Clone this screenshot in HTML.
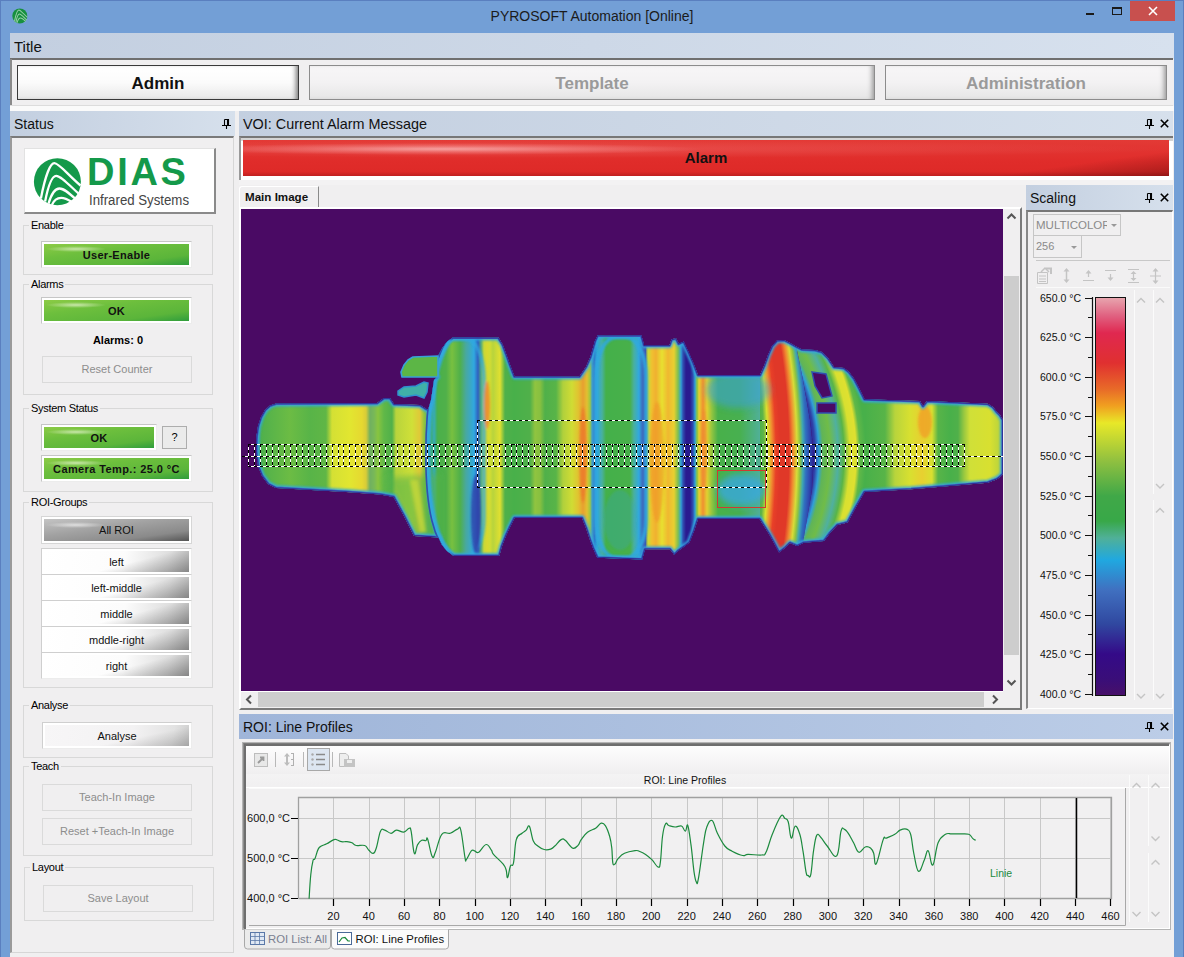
<!DOCTYPE html>
<html><head><meta charset="utf-8">
<style>
*{box-sizing:border-box;margin:0;padding:0}
html,body{width:1184px;height:957px;overflow:hidden}
body{position:relative;background:#739fd6;font-family:"Liberation Sans",sans-serif;color:#000}
.a{position:absolute}
.hdr{position:absolute;height:24px;background:linear-gradient(90deg,#c3cfe0,#d6e0ec);font-size:14px;color:#111;line-height:24px;padding-left:4px;white-space:nowrap}
.hdr.act{background:linear-gradient(90deg,#9fb5d9,#bccde7)}
.grp{position:absolute;border:1px solid #d8d8d8}
.gl{position:absolute;font-size:11px;letter-spacing:-0.3px;background:#f0eff0;padding:0 2px;line-height:13px;white-space:nowrap}
.gbtn{position:absolute;letter-spacing:0.3px;border:1px solid;border-color:#c6c6c6 #ececec #ececec #c6c6c6;padding:2px;background:radial-gradient(ellipse 30px 3px at 32px 5px,rgba(255,255,240,0.6),rgba(255,255,255,0)) content-box,linear-gradient(172deg,#8ccb46 0%,#6dbf3d 35%,#5bb53a 75%,#2f9d3c 100%) content-box,#fff;font-weight:bold;font-size:11px;text-align:center;color:#111;white-space:nowrap}
.wbtn{position:absolute;border:1px solid;border-color:#cfcfcf #ececec #ececec #cfcfcf;padding:2px;background:linear-gradient(165deg,rgba(0,0,0,0) 58%,rgba(0,0,0,0.32) 100%) content-box,linear-gradient(100deg,#fff 0%,#fcfcfc 55%,#dedede 85%,#c4c4c4 100%) content-box,#fff;font-size:11px;text-align:center;color:#111;white-space:nowrap}
.dbtn{position:absolute;border:1px solid #dadada;background:#f0eff0;font-size:11px;text-align:center;color:#8d8d8d;white-space:nowrap}
.pin{position:absolute;width:9px;height:11px}
</style></head><body>
<!-- window border -->
<div class="a" style="left:0;top:0;width:1184px;height:957px;border:1px solid #5a7fbf;border-bottom:none"></div>
<!-- title bar -->
<svg class="a" style="left:12px;top:8px" width="16" height="16" viewBox="0 0 50 50"><circle cx="24.4" cy="24.7" r="23.5" fill="#17903f"/><g stroke="#9ad0a8" stroke-width="3.2" fill="none"><path d="M7.9 41.5C12 20 17 6.2 21.4 6.2C26 6.2 35 18 47.5 28.5"/><path d="M12.1 44.5C15 30 19 18.9 23.1 18.9C28 18.9 36 28 46 37"/><path d="M15.5 46.8C18 38 22 31.5 26.5 31.5C31 31.5 36 36 42.5 42"/></g></svg>
<div class="a" style="left:0;top:6px;width:1184px;text-align:center;font-size:14px;color:#1b1b1b;line-height:20px">PYROSOFT Automation [Online]</div>
<div class="a" style="left:1086px;top:12.5px;width:8px;height:2.2px;background:#1a1a1a"></div>
<div class="a" style="left:1112px;top:7px;width:10px;height:8px;border:1px solid #1a1a1a;border-top-width:2px"></div>
<div class="a" style="left:1130px;top:1px;width:45px;height:20px;background:#c8504e"></div>
<svg class="a" style="left:1148px;top:6px" width="10" height="10" viewBox="0 0 10 10"><path d="M1 1L9 9M9 1L1 9" stroke="#fff" stroke-width="1.6"/></svg>

<!-- client area -->
<div class="a" style="left:10px;top:33px;width:1164px;height:924px;background:#f0eff0"></div>
<div class="hdr" style="left:10px;top:33px;width:1164px;height:26px;line-height:27px;padding-left:4px;font-size:15px;background:linear-gradient(90deg,#c3cfe0,#d7e1ee)">Title</div>
<div class="a" style="left:10px;top:58px;width:1163px;height:2px;background:#6f6f6f"></div>
<div class="a" style="left:10px;top:59px;width:2px;height:47px;background:#8a8a8a"></div>
<div class="a" style="left:10px;top:105px;width:1163px;height:1px;background:#dcdcdc"></div>
<div class="a" style="left:10px;top:106px;width:1164px;height:5px;background:#fafafa"></div>
<!-- top buttons -->
<div class="a" style="left:17px;top:65px;width:282px;height:35px;border:1px solid #3a3a3a;background:linear-gradient(180deg,#fff 0%,#fbfbfb 50%,#e9e9e9 100%);box-shadow:inset -5px 0 5px -3px #777;font-weight:bold;font-size:17px;text-align:center;line-height:36px;color:#111">Admin</div>
<div class="a" style="left:309px;top:65px;width:566px;height:35px;border:1px solid #8c8c8c;background:linear-gradient(180deg,#f7f6f7 0%,#f3f2f3 50%,#e6e6e6 100%);box-shadow:inset -5px 0 5px -3px #999;font-weight:bold;font-size:17px;text-align:center;line-height:36px;color:#9a9a9a">Template</div>
<div class="a" style="left:885px;top:65px;width:282px;height:35px;border:1px solid #8c8c8c;background:linear-gradient(180deg,#f7f6f7 0%,#f3f2f3 50%,#e6e6e6 100%);box-shadow:inset -5px 0 5px -3px #999;font-weight:bold;font-size:17px;text-align:center;line-height:36px;color:#9a9a9a">Administration</div>

<!-- STATUS PANEL -->
<div class="hdr" style="left:10px;top:111px;width:225px;height:25px;line-height:26px">Status</div>
<svg class="a" style="left:222px;top:119px" width="9" height="10" viewBox="0 0 9 10"><path d="M2.5 0.5H6.5V6M2.5 0.5V6M5.5 1V6M0 6.5H9M4.5 6.5V10" stroke="#000" stroke-width="1.1" fill="none"/><rect x="5" y="0.5" width="1.6" height="6" fill="#000"/></svg>
<div class="a" style="left:10px;top:136px;width:224px;height:817px;border-top:2px solid #7a7a7a;border-left:2px solid #9a9a9a;border-right:1px solid #d6d6d6;border-bottom:1px solid #d6d6d6"></div>


<!-- logo -->
<div class="a" style="left:24px;top:148px;width:192px;height:66px;background:#fff;border:1px solid #e2e2e2;border-right:2px solid #8a8a8a;border-bottom:2px solid #8a8a8a"></div>
<svg class="a" style="left:33px;top:157px" width="50" height="50" viewBox="0 0 50 50">
<circle cx="24.4" cy="24.7" r="23.5" fill="#14994a"/>
<g stroke="#fff" stroke-width="2.3" fill="none" stroke-linecap="butt">
<path d="M7.9 41.5C12 20 17 6.2 21.4 6.2C26 6.2 35 18 47.5 28.5"/>
<path d="M12.1 44.5C15 30 19 18.9 23.1 18.9C28 18.9 36 28 46 37"/>
<path d="M15.5 46.8C18 38 22 31.5 26.5 31.5C31 31.5 36 36 42.5 42"/>
<path d="M18.9 48C21 43 24.5 40.8 28.2 40.8C31 40.8 35 42.5 39 45"/>
</g></svg>
<div class="a" style="left:87px;top:150px;font-size:38px;font-weight:bold;color:#14994a;letter-spacing:2.7px;line-height:44px">DIAS</div>
<div class="a" style="left:89px;top:192px;font-size:14px;color:#444;line-height:16px;transform:scaleX(0.945);transform-origin:0 0">Infrared Systems</div>

<!-- Enable -->
<div class="grp" style="left:23px;top:225px;width:190px;height:50px"></div>
<div class="gl" style="left:29px;top:219px">Enable</div>
<div class="gbtn" style="left:41px;top:241px;width:151px;height:27px;line-height:22px">User-Enable</div>

<!-- Alarms -->
<div class="grp" style="left:23px;top:284px;width:190px;height:111px"></div>
<div class="gl" style="left:29px;top:278px">Alarms</div>
<div class="gbtn" style="left:41px;top:297px;width:151px;height:27px;line-height:22px">OK</div>
<div class="a" style="left:23px;top:333px;width:190px;text-align:center;font-size:11px;font-weight:bold;line-height:14px">Alarms: 0</div>
<div class="dbtn" style="left:42px;top:356px;width:150px;height:27px;line-height:25px">Reset Counter</div>

<!-- System Status -->
<div class="grp" style="left:23px;top:408px;width:190px;height:84px"></div>
<div class="gl" style="left:29px;top:402px">System Status</div>
<div class="gbtn" style="left:41px;top:424px;width:116px;height:27px;line-height:22px">OK</div>
<div class="a" style="left:162px;top:426px;width:25px;height:23px;border:1px solid #adadad;background:#ebebeb;font-size:11px;text-align:center;line-height:21px">?</div>
<div class="gbtn" style="left:41px;top:455px;width:151px;height:27px;line-height:22px;letter-spacing:0.4px">Camera Temp.: 25.0 &deg;C</div>

<!-- ROI-Groups -->
<div class="grp" style="left:23px;top:502px;width:190px;height:186px"></div>
<div class="gl" style="left:29px;top:496px">ROI-Groups</div>
<div class="a" style="left:41px;top:516px;width:151px;height:28px;border:1px solid #d6d6d6;padding:2px;background:radial-gradient(ellipse 30px 3px at 32px 6px,rgba(255,255,255,0.6),rgba(255,255,255,0)) content-box,linear-gradient(172deg,#c4c4c4 0%,#a2a2a2 40%,#8a8a8a 75%,#555 100%) content-box,#fff;font-size:11px;text-align:center;line-height:23px;color:#111">All ROI</div>
<div class="wbtn" style="left:41px;top:548px;width:151px;height:27px;line-height:22px">left</div>
<div class="wbtn" style="left:41px;top:574px;width:151px;height:27px;line-height:22px">left-middle</div>
<div class="wbtn" style="left:41px;top:600px;width:151px;height:27px;line-height:22px">middle</div>
<div class="wbtn" style="left:41px;top:626px;width:151px;height:27px;line-height:22px">mddle-right</div>
<div class="wbtn" style="left:41px;top:652px;width:151px;height:27px;line-height:22px">right</div>

<!-- Analyse -->
<div class="grp" style="left:23px;top:705px;width:190px;height:53px"></div>
<div class="gl" style="left:29px;top:699px">Analyse</div>
<div class="wbtn" style="left:42px;top:722px;width:150px;height:27px;line-height:22px;background:linear-gradient(168deg,rgba(0,0,0,0) 62%,rgba(0,0,0,0.2) 100%) content-box,linear-gradient(100deg,#f7f6f7 0%,#f3f2f3 60%,#e2e2e2 88%,#cdcdcd 100%) content-box,#fff">Analyse</div>

<!-- Teach -->
<div class="grp" style="left:23px;top:766px;width:190px;height:90px"></div>
<div class="gl" style="left:29px;top:760px">Teach</div>
<div class="dbtn" style="left:42px;top:784px;width:150px;height:27px;line-height:25px">Teach-In Image</div>
<div class="dbtn" style="left:42px;top:818px;width:150px;height:27px;line-height:25px">Reset +Teach-In Image</div>

<!-- Layout -->
<div class="grp" style="left:24px;top:867px;width:190px;height:54px"></div>
<div class="gl" style="left:30px;top:861px">Layout</div>
<div class="dbtn" style="left:43px;top:885px;width:150px;height:27px;line-height:25px">Save Layout</div>


<!-- VOI PANEL -->
<div class="hdr" style="left:239px;top:111px;width:934px;height:25px;line-height:26px;font-size:14.4px">VOI: Current Alarm Message</div>
<svg class="a" style="left:1145px;top:119px" width="9" height="10" viewBox="0 0 9 10"><path d="M2.5 0.5H6.5V6M2.5 0.5V6M5.5 1V6M0 6.5H9M4.5 6.5V10" stroke="#000" stroke-width="1.1" fill="none"/><rect x="5" y="0.5" width="1.6" height="6" fill="#000"/></svg><svg class="a" style="left:1160px;top:119px" width="9" height="9" viewBox="0 0 9 9"><path d="M0.8 0.8L8.2 8.2M8.2 0.8L0.8 8.2" stroke="#000" stroke-width="1.6"/></svg>
<div class="a" style="left:239px;top:136px;width:934px;height:44px;border-top:2px solid #777;border-left:2px solid #999;background:#fff"></div>
<div class="a" style="left:241px;top:138px;width:932px;height:3px;background:#d4d4d4"></div>
<div class="a" style="left:243px;top:140px;width:926px;height:36px;background:linear-gradient(180deg,#e33a36 0%,#e02c2a 60%,#de2a28 88%,#c02020 100%)"></div>
<div class="a" style="left:243px;top:140px;width:926px;height:36px;background:linear-gradient(172deg,rgba(0,0,0,0) 85%,rgba(60,0,0,0.35) 100%)"></div>
<div class="a" style="left:243px;top:140px;width:926px;height:36px;background:radial-gradient(ellipse 260px 6px at 200px 9px,rgba(255,215,215,0.62) 0%,rgba(255,190,190,0.3) 50%,rgba(255,150,150,0) 100%),radial-gradient(ellipse 600px 9px at 330px 9px,rgba(255,160,160,0.22) 0%,rgba(255,150,150,0) 100%)"></div>
<div class="a" style="left:243px;top:149px;width:926px;text-align:center;font-size:15px;font-weight:bold;line-height:18px;color:#111">Alarm</div>
<div class="a" style="left:239px;top:180px;width:934px;height:5px;background:#f3f2f3"></div>

<!-- main image frame -->
<div class="a" style="left:239px;top:186px;width:80px;height:22px;background:#f0eff0;border-top:1px solid #fff;border-left:1px solid #fff;border-right:1px solid #8a8a8a;border-radius:3px 0 0 0"></div>
<div class="a" style="left:245px;top:189px;font-size:11.6px;font-weight:bold;line-height:15px;color:#111">Main Image</div>
<div class="a" style="left:239px;top:207px;width:783px;height:503px;background:#f0eff0;border-top:2px solid #fff;border-left:2px solid #fff;border-right:2px solid #7a7a7a;border-bottom:2px solid #7a7a7a"></div>
<div class="a" style="left:241px;top:209px;width:762px;height:482px;background:#4a0a64"></div>
<div class="a" style="left:241px;top:691px;width:762px;height:1px;background:#fff"></div>
<!-- v scrollbar -->
<div class="a" style="left:1004px;top:276px;width:15px;height:379px;background:#cdcdcd"></div>
<svg class="a" style="left:1006px;top:212px" width="11" height="8" viewBox="0 0 11 8"><path d="M1.5 6.5L5.5 2.5L9.5 6.5" stroke="#555" stroke-width="2" fill="none"/></svg>
<svg class="a" style="left:1006px;top:679px" width="11" height="8" viewBox="0 0 11 8"><path d="M1.5 1.5L5.5 5.5L9.5 1.5" stroke="#555" stroke-width="2" fill="none"/></svg>
<!-- h scrollbar -->
<div class="a" style="left:258px;top:692px;width:726px;height:15px;background:#cdcdcd"></div>
<svg class="a" style="left:245px;top:694px" width="8" height="11" viewBox="0 0 8 11"><path d="M6 1.5L2 5.5L6 9.5" stroke="#555" stroke-width="2" fill="none"/></svg>
<svg class="a" style="left:991px;top:694px" width="8" height="11" viewBox="0 0 8 11"><path d="M2 1.5L6 5.5L2 9.5" stroke="#555" stroke-width="2" fill="none"/></svg>
<!--THERMAL-->
<svg class="a" style="left:241px;top:209px" width="762" height="482" viewBox="0 0 762 482">
<defs><linearGradient id="g1" gradientUnits="userSpaceOnUse" x1="15" y1="0" x2="191" y2="0"><stop offset="0.0000" stop-color="#3090d8"/><stop offset="0.0284" stop-color="#50b04c"/><stop offset="0.1932" stop-color="#6cbc44"/><stop offset="0.3068" stop-color="#58b448"/><stop offset="0.3977" stop-color="#60b646"/><stop offset="0.4318" stop-color="#d4e034"/><stop offset="0.5341" stop-color="#e2e630"/><stop offset="0.6023" stop-color="#e6d830"/><stop offset="0.6250" stop-color="#d8cc38"/><stop offset="0.6477" stop-color="#70b060"/><stop offset="0.6705" stop-color="#78b858"/><stop offset="0.6932" stop-color="#88c440"/><stop offset="0.7273" stop-color="#60b848"/><stop offset="0.7727" stop-color="#50b04a"/><stop offset="0.7955" stop-color="#b8d43c"/><stop offset="0.8864" stop-color="#d0e038"/><stop offset="0.9318" stop-color="#e0c838"/><stop offset="0.9545" stop-color="#90c440"/><stop offset="0.9773" stop-color="#60b060"/><stop offset="1.0000" stop-color="#50b04a"/></linearGradient><linearGradient id="g2" gradientUnits="userSpaceOnUse" x1="187" y1="0" x2="273" y2="0"><stop offset="0.0000" stop-color="#50b04a"/><stop offset="0.0698" stop-color="#48b04a"/><stop offset="0.2093" stop-color="#50b04a"/><stop offset="0.2791" stop-color="#78c040"/><stop offset="0.3721" stop-color="#50b04a"/><stop offset="0.4419" stop-color="#48a8a0"/><stop offset="0.5349" stop-color="#30a8e0"/><stop offset="0.5814" stop-color="#3060c0"/><stop offset="0.6163" stop-color="#50a880"/><stop offset="0.6512" stop-color="#c8d838"/><stop offset="0.6860" stop-color="#d8d830"/><stop offset="0.7209" stop-color="#d0dc34"/><stop offset="0.7558" stop-color="#b8d43c"/><stop offset="0.8372" stop-color="#e0e030"/><stop offset="0.8953" stop-color="#50b04a"/><stop offset="1.0000" stop-color="#48b04a"/></linearGradient><linearGradient id="g3" gradientUnits="userSpaceOnUse" x1="273" y1="0" x2="357" y2="0"><stop offset="0.0000" stop-color="#48b04a"/><stop offset="0.1905" stop-color="#50b04a"/><stop offset="0.2500" stop-color="#90c440"/><stop offset="0.3095" stop-color="#88c040"/><stop offset="0.3690" stop-color="#50b04a"/><stop offset="0.5000" stop-color="#58b448"/><stop offset="0.5833" stop-color="#b0d03c"/><stop offset="0.6905" stop-color="#d0dc34"/><stop offset="0.7619" stop-color="#e0c430"/><stop offset="0.8214" stop-color="#e8a030"/><stop offset="0.8690" stop-color="#e0c030"/><stop offset="0.9048" stop-color="#a0c840"/><stop offset="0.9286" stop-color="#40a0c8"/><stop offset="0.9643" stop-color="#3070c8"/><stop offset="1.0000" stop-color="#48b04a"/></linearGradient><linearGradient id="g4" gradientUnits="userSpaceOnUse" x1="351" y1="0" x2="406" y2="0"><stop offset="0.0000" stop-color="#c0d838"/><stop offset="0.0364" stop-color="#3070c8"/><stop offset="0.0909" stop-color="#30a8d8"/><stop offset="0.1818" stop-color="#48b0a0"/><stop offset="0.2545" stop-color="#44b04a"/><stop offset="0.6909" stop-color="#48b04a"/><stop offset="0.7636" stop-color="#48b0a0"/><stop offset="0.8545" stop-color="#30a8e0"/><stop offset="0.9273" stop-color="#4060b8"/><stop offset="1.0000" stop-color="#3a50b0"/></linearGradient><linearGradient id="g5" gradientUnits="userSpaceOnUse" x1="404" y1="0" x2="456" y2="0"><stop offset="0.0000" stop-color="#3a50b0"/><stop offset="0.0577" stop-color="#c8dc38"/><stop offset="0.1346" stop-color="#f0c030"/><stop offset="0.2115" stop-color="#f0b030"/><stop offset="0.3269" stop-color="#e8e030"/><stop offset="0.4423" stop-color="#f0b830"/><stop offset="0.5577" stop-color="#e8d030"/><stop offset="0.6346" stop-color="#80c050"/><stop offset="0.6923" stop-color="#30a0d8"/><stop offset="0.7308" stop-color="#3050b0"/><stop offset="0.7885" stop-color="#2a1a90"/><stop offset="0.8654" stop-color="#2a1a90"/><stop offset="0.9231" stop-color="#3050b0"/><stop offset="0.9615" stop-color="#30a0d8"/><stop offset="1.0000" stop-color="#90c440"/></linearGradient><linearGradient id="g6" gradientUnits="userSpaceOnUse" x1="456" y1="0" x2="525" y2="0"><stop offset="0.0000" stop-color="#80c040"/><stop offset="0.0290" stop-color="#e8d030"/><stop offset="0.0870" stop-color="#f09030"/><stop offset="0.1449" stop-color="#e0d030"/><stop offset="0.2174" stop-color="#90c440"/><stop offset="0.3043" stop-color="#48b04a"/><stop offset="0.6232" stop-color="#48b050"/><stop offset="0.9130" stop-color="#50b098"/><stop offset="1.0000" stop-color="#60b448"/></linearGradient><linearGradient id="g8" gradientUnits="userSpaceOnUse" x1="624" y1="0" x2="762" y2="0"><stop offset="0.0000" stop-color="#48b04a"/><stop offset="0.1449" stop-color="#58b448"/><stop offset="0.2174" stop-color="#b8d43c"/><stop offset="0.3261" stop-color="#d8e030"/><stop offset="0.4130" stop-color="#e8d030"/><stop offset="0.4855" stop-color="#d8e030"/><stop offset="0.5290" stop-color="#58b448"/><stop offset="0.6159" stop-color="#48b04a"/><stop offset="0.6739" stop-color="#50b04a"/><stop offset="0.7174" stop-color="#98c840"/><stop offset="0.7609" stop-color="#d0e038"/><stop offset="0.9058" stop-color="#d8e030"/><stop offset="1.0000" stop-color="#b0d040"/></linearGradient><radialGradient id="g7" gradientUnits="userSpaceOnUse" cx="-156" cy="246" r="729"><stop offset="0" stop-color="#48b04a"/><stop offset="0.9259" stop-color="#48b04a"/><stop offset="0.9314" stop-color="#60b448"/><stop offset="0.9369" stop-color="#d8e030"/><stop offset="0.9424" stop-color="#f09030"/><stop offset="0.9479" stop-color="#e84028"/><stop offset="0.9534" stop-color="#e03828"/><stop offset="0.9657" stop-color="#e03828"/><stop offset="0.9712" stop-color="#f08830"/><stop offset="0.9767" stop-color="#d8dc38"/><stop offset="0.9808" stop-color="#90c440"/><stop offset="0.9849" stop-color="#40a8b0"/><stop offset="0.9890" stop-color="#3070c0"/><stop offset="0.9945" stop-color="#3048b0"/><stop offset="1.0000" stop-color="#2a2090"/></radialGradient><radialGradient id="g7b" gradientUnits="userSpaceOnUse" cx="373" cy="246" r="252"><stop offset="0" stop-color="#2a2090"/><stop offset="0.7619" stop-color="#2a2090"/><stop offset="0.7817" stop-color="#2a2090"/><stop offset="0.7976" stop-color="#3040a8"/><stop offset="0.8135" stop-color="#30a0d8"/><stop offset="0.8294" stop-color="#60b458"/><stop offset="0.8571" stop-color="#70bc48"/><stop offset="0.8889" stop-color="#50b0a0"/><stop offset="0.9127" stop-color="#58b448"/><stop offset="0.9365" stop-color="#d8e030"/><stop offset="0.9603" stop-color="#e0e030"/><stop offset="0.9762" stop-color="#60b848"/><stop offset="1.0000" stop-color="#48b04a"/></radialGradient><clipPath id="sil"><path d="M15.0 243.0 L15.5 227.0 L17.0 217.0 L20.0 208.0 L24.0 201.0 L29.0 196.5 L35.0 194.5 L136.0 194.0 L143.0 189.0 L149.0 189.0 L153.0 195.0 L179.0 196.0 L187.0 201.0 L190.0 191.0 L193.0 171.0 L196.0 168.0 L161.0 168.0 L160.0 163.0 L163.0 156.0 L167.0 151.0 L172.0 148.0 L197.0 147.0 L201.0 139.6 L206.0 132.8 L211.9 128.6 L257.5 128.6 L261.7 135.4 L265.0 144.6 L269.3 156.5 L273.5 167.5 L338.4 167.5 L345.0 157.7 L349.4 147.8 L353.8 132.5 L356.5 126.4 L400.4 126.4 L403.2 136.3 L428.4 136.3 L430.6 130.3 L435.0 129.2 L437.8 134.7 L442.7 132.5 L448.2 144.5 L452.6 154.4 L457.0 166.0 L519.0 166.0 L523.0 157.0 L527.0 146.0 L531.0 137.0 L536.0 131.5 L543.0 131.0 L549.0 134.0 L556.0 138.0 L561.0 140.4 L574.0 141.0 L581.0 143.0 L587.0 149.0 L593.0 158.0 L603.0 159.0 L608.0 163.0 L613.3 170.0 L618.0 179.0 L623.5 190.3 L679.0 192.0 L682.0 197.0 L686.0 192.0 L746.7 194.8 L752.0 198.0 L755.5 202.4 L759.0 206.0 L762.0 211.0 L762.0 265.0 L759.0 268.0 L755.5 270.4 L746.7 273.7 L691.0 278.5 L670.0 280.3 L623.5 283.0 L615.0 298.0 L606.6 313.5 L596.4 316.0 L589.0 324.0 L583.0 332.0 L562.6 333.8 L556.0 337.0 L549.0 334.0 L544.0 339.0 L538.0 343.6 L533.0 334.0 L528.0 325.0 L523.0 317.0 L518.6 310.0 L457.0 310.0 L453.0 322.0 L448.5 333.5 L444.0 337.0 L437.0 342.0 L433.3 346.0 L429.0 340.3 L404.0 340.3 L401.2 350.4 L356.3 348.7 L352.0 339.0 L349.0 331.0 L345.0 319.0 L341.0 309.0 L273.5 309.0 L269.0 318.0 L265.0 326.7 L261.0 337.0 L258.3 347.0 L212.7 347.0 L206.0 342.0 L201.0 336.0 L197.5 328.4 L173.0 326.9 L163.0 307.0 L152.6 288.0 L139.0 285.5 L105.0 283.0 L35.0 279.0 L27.0 275.0 L21.0 267.0 L17.0 257.0Z"/></clipPath><filter id="bl" x="-5%" y="-5%" width="110%" height="110%"><feGaussianBlur stdDeviation="0.9"/></filter><filter id="bl2" x="-20%" y="-20%" width="140%" height="140%"><feGaussianBlur stdDeviation="3"/></filter></defs>
<rect width="762" height="482" fill="#4a0a64"/>
<g clip-path="url(#sil)">
<rect x="0" y="0" width="190.5" height="482" fill="url(#g1)"/>
<rect x="190" y="0" width="83.5" height="482" fill="url(#g2)"/>
<rect x="273" y="0" width="80.5" height="482" fill="url(#g3)"/>
<rect x="353" y="0" width="52.5" height="482" fill="url(#g4)"/>
<rect x="405" y="0" width="51.5" height="482" fill="url(#g5)"/>
<rect x="456" y="0" width="65.5" height="482" fill="url(#g6)"/>
<rect x="624" y="0" width="138.5" height="482" fill="url(#g8)"/>
<path d="M519.0 111.0 L552.0 121.0 L555.0 136.0 L562.0 171.0 L569.0 211.0 L573.0 246.0 L571.0 281.0 L565.0 316.0 L559.0 351.0 L556.0 366.0 L519.0 381.0Z" fill="url(#g7)"/>
<path d="M552.0 121.0 L555.0 136.0 L562.0 171.0 L569.0 211.0 L573.0 246.0 L571.0 281.0 L565.0 316.0 L559.0 351.0 L556.0 366.0 L625.0 381.0 L625.0 111.0Z" fill="url(#g7b)"/>
<g filter="url(#bl)"><ellipse cx="379" cy="311" rx="16" ry="30" fill="#30a0d8" opacity="0.25"/><ellipse cx="497" cy="181" rx="32" ry="18" fill="#3aa0e0" opacity="0.55" filter="url(#bl2)"/><ellipse cx="500" cy="281" rx="24" ry="16" fill="#38a8e0" opacity="0.8" filter="url(#bl2)"/><rect x="355" y="128" width="50" height="221" rx="20" ry="40" fill="none" stroke="#30a8e0" stroke-width="4" opacity="0.9"/><rect x="193" y="130" width="50" height="218" rx="18" ry="40" fill="none" stroke="#30a8e0" stroke-width="3.5" opacity="0.75"/><ellipse cx="684" cy="213" rx="7" ry="16" fill="#f0a028" opacity="0.8"/><path d="M144 269L153 291L173 331L199 331L199 265Z" fill="#58b448" opacity="0.6" filter="url(#bl2)"/><path d="M169 271L177 271L185 323L179 323Z" fill="#d0dc38" opacity="0.7" filter="url(#bl)"/><ellipse cx="235" cy="306" rx="5" ry="40" fill="#3040a8" opacity="0.8"/><ellipse cx="246" cy="196" rx="3" ry="24" fill="#f08830" opacity="0.85"/><ellipse cx="342" cy="246" rx="3.5" ry="48" fill="#ec7a28" opacity="0.85"/><ellipse cx="416" cy="253" rx="7" ry="60" fill="#f09428" opacity="0.6"/><ellipse cx="463" cy="241" rx="3" ry="40" fill="#f08830" opacity="0.6"/></g>
<path d="M15.0 243.0 L15.5 227.0 L17.0 217.0 L20.0 208.0 L24.0 201.0 L29.0 196.5 L35.0 194.5 L136.0 194.0 L143.0 189.0 L149.0 189.0 L153.0 195.0 L179.0 196.0 L187.0 201.0 L190.0 191.0 L193.0 171.0 L196.0 168.0 L161.0 168.0 L160.0 163.0 L163.0 156.0 L167.0 151.0 L172.0 148.0 L197.0 147.0 L201.0 139.6 L206.0 132.8 L211.9 128.6 L257.5 128.6 L261.7 135.4 L265.0 144.6 L269.3 156.5 L273.5 167.5 L338.4 167.5 L345.0 157.7 L349.4 147.8 L353.8 132.5 L356.5 126.4 L400.4 126.4 L403.2 136.3 L428.4 136.3 L430.6 130.3 L435.0 129.2 L437.8 134.7 L442.7 132.5 L448.2 144.5 L452.6 154.4 L457.0 166.0 L519.0 166.0 L523.0 157.0 L527.0 146.0 L531.0 137.0 L536.0 131.5 L543.0 131.0 L549.0 134.0 L556.0 138.0 L561.0 140.4 L574.0 141.0 L581.0 143.0 L587.0 149.0 L593.0 158.0 L603.0 159.0 L608.0 163.0 L613.3 170.0 L618.0 179.0 L623.5 190.3 L679.0 192.0 L682.0 197.0 L686.0 192.0 L746.7 194.8 L752.0 198.0 L755.5 202.4 L759.0 206.0 L762.0 211.0 L762.0 265.0 L759.0 268.0 L755.5 270.4 L746.7 273.7 L691.0 278.5 L670.0 280.3 L623.5 283.0 L615.0 298.0 L606.6 313.5 L596.4 316.0 L589.0 324.0 L583.0 332.0 L562.6 333.8 L556.0 337.0 L549.0 334.0 L544.0 339.0 L538.0 343.6 L533.0 334.0 L528.0 325.0 L523.0 317.0 L518.6 310.0 L457.0 310.0 L453.0 322.0 L448.5 333.5 L444.0 337.0 L437.0 342.0 L433.3 346.0 L429.0 340.3 L404.0 340.3 L401.2 350.4 L356.3 348.7 L352.0 339.0 L349.0 331.0 L345.0 319.0 L341.0 309.0 L273.5 309.0 L269.0 318.0 L265.0 326.7 L261.0 337.0 L258.3 347.0 L212.7 347.0 L206.0 342.0 L201.0 336.0 L197.5 328.4 L173.0 326.9 L163.0 307.0 L152.6 288.0 L139.0 285.5 L105.0 283.0 L35.0 279.0 L27.0 275.0 L21.0 267.0 L17.0 257.0Z" fill="none" stroke="#30a8e0" stroke-width="6" stroke-linejoin="round" opacity="0.9" filter="url(#bl)"/>
<path d="M15.0 243.0 L15.5 227.0 L17.0 217.0 L20.0 208.0 L24.0 201.0 L29.0 196.5 L35.0 194.5 L136.0 194.0 L143.0 189.0 L149.0 189.0 L153.0 195.0 L179.0 196.0 L187.0 201.0 L190.0 191.0 L193.0 171.0 L196.0 168.0 L161.0 168.0 L160.0 163.0 L163.0 156.0 L167.0 151.0 L172.0 148.0 L197.0 147.0 L201.0 139.6 L206.0 132.8 L211.9 128.6 L257.5 128.6 L261.7 135.4 L265.0 144.6 L269.3 156.5 L273.5 167.5 L338.4 167.5 L345.0 157.7 L349.4 147.8 L353.8 132.5 L356.5 126.4 L400.4 126.4 L403.2 136.3 L428.4 136.3 L430.6 130.3 L435.0 129.2 L437.8 134.7 L442.7 132.5 L448.2 144.5 L452.6 154.4 L457.0 166.0 L519.0 166.0 L523.0 157.0 L527.0 146.0 L531.0 137.0 L536.0 131.5 L543.0 131.0 L549.0 134.0 L556.0 138.0 L561.0 140.4 L574.0 141.0 L581.0 143.0 L587.0 149.0 L593.0 158.0 L603.0 159.0 L608.0 163.0 L613.3 170.0 L618.0 179.0 L623.5 190.3 L679.0 192.0 L682.0 197.0 L686.0 192.0 L746.7 194.8 L752.0 198.0 L755.5 202.4 L759.0 206.0 L762.0 211.0 L762.0 265.0 L759.0 268.0 L755.5 270.4 L746.7 273.7 L691.0 278.5 L670.0 280.3 L623.5 283.0 L615.0 298.0 L606.6 313.5 L596.4 316.0 L589.0 324.0 L583.0 332.0 L562.6 333.8 L556.0 337.0 L549.0 334.0 L544.0 339.0 L538.0 343.6 L533.0 334.0 L528.0 325.0 L523.0 317.0 L518.6 310.0 L457.0 310.0 L453.0 322.0 L448.5 333.5 L444.0 337.0 L437.0 342.0 L433.3 346.0 L429.0 340.3 L404.0 340.3 L401.2 350.4 L356.3 348.7 L352.0 339.0 L349.0 331.0 L345.0 319.0 L341.0 309.0 L273.5 309.0 L269.0 318.0 L265.0 326.7 L261.0 337.0 L258.3 347.0 L212.7 347.0 L206.0 342.0 L201.0 336.0 L197.5 328.4 L173.0 326.9 L163.0 307.0 L152.6 288.0 L139.0 285.5 L105.0 283.0 L35.0 279.0 L27.0 275.0 L21.0 267.0 L17.0 257.0Z" fill="none" stroke="#3858b8" stroke-width="3" stroke-linejoin="round"/>
<path d="M15.0 243.0 L15.5 227.0 L17.0 217.0 L20.0 208.0 L24.0 201.0 L29.0 196.5 L35.0 194.5 L136.0 194.0 L143.0 189.0 L149.0 189.0 L153.0 195.0 L179.0 196.0 L187.0 201.0 L190.0 191.0 L193.0 171.0 L196.0 168.0 L161.0 168.0 L160.0 163.0 L163.0 156.0 L167.0 151.0 L172.0 148.0 L197.0 147.0 L201.0 139.6 L206.0 132.8 L211.9 128.6 L257.5 128.6 L261.7 135.4 L265.0 144.6 L269.3 156.5 L273.5 167.5 L338.4 167.5 L345.0 157.7 L349.4 147.8 L353.8 132.5 L356.5 126.4 L400.4 126.4 L403.2 136.3 L428.4 136.3 L430.6 130.3 L435.0 129.2 L437.8 134.7 L442.7 132.5 L448.2 144.5 L452.6 154.4 L457.0 166.0 L519.0 166.0 L523.0 157.0 L527.0 146.0 L531.0 137.0 L536.0 131.5 L543.0 131.0 L549.0 134.0 L556.0 138.0 L561.0 140.4 L574.0 141.0 L581.0 143.0 L587.0 149.0 L593.0 158.0 L603.0 159.0 L608.0 163.0 L613.3 170.0 L618.0 179.0 L623.5 190.3 L679.0 192.0 L682.0 197.0 L686.0 192.0 L746.7 194.8 L752.0 198.0 L755.5 202.4 L759.0 206.0 L762.0 211.0 L762.0 265.0 L759.0 268.0 L755.5 270.4 L746.7 273.7 L691.0 278.5 L670.0 280.3 L623.5 283.0 L615.0 298.0 L606.6 313.5 L596.4 316.0 L589.0 324.0 L583.0 332.0 L562.6 333.8 L556.0 337.0 L549.0 334.0 L544.0 339.0 L538.0 343.6 L533.0 334.0 L528.0 325.0 L523.0 317.0 L518.6 310.0 L457.0 310.0 L453.0 322.0 L448.5 333.5 L444.0 337.0 L437.0 342.0 L433.3 346.0 L429.0 340.3 L404.0 340.3 L401.2 350.4 L356.3 348.7 L352.0 339.0 L349.0 331.0 L345.0 319.0 L341.0 309.0 L273.5 309.0 L269.0 318.0 L265.0 326.7 L261.0 337.0 L258.3 347.0 L212.7 347.0 L206.0 342.0 L201.0 336.0 L197.5 328.4 L173.0 326.9 L163.0 307.0 L152.6 288.0 L139.0 285.5 L105.0 283.0 L35.0 279.0 L27.0 275.0 L21.0 267.0 L17.0 257.0Z" fill="none" stroke="#2a1c88" stroke-width="1.2" stroke-linejoin="round"/>
<path d="M209 129C195 151 187 191 187 246C187 301 195 331 211 348" fill="none" stroke="#30a8e0" stroke-width="5" filter="url(#bl)"/>
<path d="M209 129C195 151 187 191 187 246C187 301 195 331 211 348" transform="translate(-2.2 0)" fill="none" stroke="#3050b0" stroke-width="1.6"/>
</g>
<path d="M157.0 182.0 L163.0 178.0 L175.0 177.0 L183.0 173.0 L187.0 174.0 L186.0 183.0 L183.0 189.0 L175.0 186.0 L163.0 188.0 L157.0 186.0Z" fill="#40b0a8" stroke="#3090d0" stroke-width="1.5"/>
<path d="M161.0 168.0 L160.0 163.0 L163.0 156.0 L167.0 151.0 L172.0 148.0 L197.0 147.0 L197.0 168.0Z" fill="#5cb646" stroke="#38a0d8" stroke-width="1.6" stroke-linejoin="round"/>
<path d="M571.0 163.0 L585.0 165.0 L591.0 187.0 L581.0 189.0 L574.0 177.0Z" fill="#4a0a64" stroke="#3050b0" stroke-width="1.5"/>
<path d="M576.0 194.0 L595.0 194.0 L595.0 204.0 L576.0 204.0Z" fill="#4a0a64" stroke="#3050b0" stroke-width="1.5"/>
<path d="M236 211.5H526M236 278.5H526M236.5 211V279M525.5 211V279" fill="none" stroke="#fff" stroke-width="1"/>
<path d="M236 211.5H526M236 278.5H526M236.5 211V279M525.5 211V279" fill="none" stroke="#000" stroke-width="1" stroke-dasharray="3 3"/>
<path d="M7 235.5H724M7 257.5H724M1 247.5H762M7.5 235V258M13.5 235V258M19.5 235V258M25.5 235V258M31.5 235V258M37.5 235V258M43.5 235V258M49.5 235V258M55.5 235V258M61.5 235V258M67.5 235V258M73.5 235V258M79.5 235V258M85.5 235V258M91.5 235V258M97.5 235V258M102.5 235V258M108.5 235V258M114.5 235V258M120.5 235V258M126.5 235V258M132.5 235V258M138.5 235V258M144.5 235V258M150.5 235V258M156.5 235V258M162.5 235V258M168.5 235V258M174.5 235V258M180.5 235V258M186.5 235V258M192.5 235V258M198.5 235V258M204.5 235V258M210.5 235V258M216.5 235V258M222.5 235V258M228.5 235V258M234.5 235V258M240.5 235V258M246.5 235V258M252.5 235V258M258.5 235V258M264.5 235V258M270.5 235V258M275.5 235V258M281.5 235V258M287.5 235V258M293.5 235V258M299.5 235V258M305.5 235V258M311.5 235V258M317.5 235V258M323.5 235V258M329.5 235V258M335.5 235V258M341.5 235V258M347.5 235V258M353.5 235V258M359.5 235V258M365.5 235V258M371.5 235V258M377.5 235V258M383.5 235V258M389.5 235V258M395.5 235V258M401.5 235V258M407.5 235V258M413.5 235V258M419.5 235V258M425.5 235V258M431.5 235V258M437.5 235V258M443.5 235V258M449.5 235V258M455.5 235V258M460.5 235V258M466.5 235V258M472.5 235V258M478.5 235V258M484.5 235V258M490.5 235V258M496.5 235V258M502.5 235V258M508.5 235V258M514.5 235V258M520.5 235V258M526.5 235V258M532.5 235V258M538.5 235V258M544.5 235V258M550.5 235V258M556.5 235V258M562.5 235V258M568.5 235V258M574.5 235V258M580.5 235V258M586.5 235V258M592.5 235V258M598.5 235V258M604.5 235V258M610.5 235V258M616.5 235V258M622.5 235V258M628.5 235V258M633.5 235V258M639.5 235V258M645.5 235V258M651.5 235V258M657.5 235V258M663.5 235V258M669.5 235V258M675.5 235V258M681.5 235V258M687.5 235V258M693.5 235V258M699.5 235V258M705.5 235V258M711.5 235V258M717.5 235V258M723.5 235V258" fill="none" stroke="#fff" stroke-width="1"/>
<path d="M7 235.5H724M7 257.5H724M1 247.5H762M7.5 235V258M13.5 235V258M19.5 235V258M25.5 235V258M31.5 235V258M37.5 235V258M43.5 235V258M49.5 235V258M55.5 235V258M61.5 235V258M67.5 235V258M73.5 235V258M79.5 235V258M85.5 235V258M91.5 235V258M97.5 235V258M102.5 235V258M108.5 235V258M114.5 235V258M120.5 235V258M126.5 235V258M132.5 235V258M138.5 235V258M144.5 235V258M150.5 235V258M156.5 235V258M162.5 235V258M168.5 235V258M174.5 235V258M180.5 235V258M186.5 235V258M192.5 235V258M198.5 235V258M204.5 235V258M210.5 235V258M216.5 235V258M222.5 235V258M228.5 235V258M234.5 235V258M240.5 235V258M246.5 235V258M252.5 235V258M258.5 235V258M264.5 235V258M270.5 235V258M275.5 235V258M281.5 235V258M287.5 235V258M293.5 235V258M299.5 235V258M305.5 235V258M311.5 235V258M317.5 235V258M323.5 235V258M329.5 235V258M335.5 235V258M341.5 235V258M347.5 235V258M353.5 235V258M359.5 235V258M365.5 235V258M371.5 235V258M377.5 235V258M383.5 235V258M389.5 235V258M395.5 235V258M401.5 235V258M407.5 235V258M413.5 235V258M419.5 235V258M425.5 235V258M431.5 235V258M437.5 235V258M443.5 235V258M449.5 235V258M455.5 235V258M460.5 235V258M466.5 235V258M472.5 235V258M478.5 235V258M484.5 235V258M490.5 235V258M496.5 235V258M502.5 235V258M508.5 235V258M514.5 235V258M520.5 235V258M526.5 235V258M532.5 235V258M538.5 235V258M544.5 235V258M550.5 235V258M556.5 235V258M562.5 235V258M568.5 235V258M574.5 235V258M580.5 235V258M586.5 235V258M592.5 235V258M598.5 235V258M604.5 235V258M610.5 235V258M616.5 235V258M622.5 235V258M628.5 235V258M633.5 235V258M639.5 235V258M645.5 235V258M651.5 235V258M657.5 235V258M663.5 235V258M669.5 235V258M675.5 235V258M681.5 235V258M687.5 235V258M693.5 235V258M699.5 235V258M705.5 235V258M711.5 235V258M717.5 235V258M723.5 235V258" fill="none" stroke="#000" stroke-width="1" stroke-dasharray="3 3"/>
<rect x="476.5" y="261.5" width="48" height="37" fill="none" stroke="#d03a30" stroke-width="1"/>
</svg>
<!--/THERMAL-->

<!-- SCALING PANEL -->
<div class="hdr" style="left:1026px;top:185px;width:147px;height:25px;line-height:26px">Scaling</div>
<svg class="a" style="left:1145px;top:193px" width="9" height="10" viewBox="0 0 9 10"><path d="M2.5 0.5H6.5V6M2.5 0.5V6M5.5 1V6M0 6.5H9M4.5 6.5V10" stroke="#000" stroke-width="1.1" fill="none"/><rect x="5" y="0.5" width="1.6" height="6" fill="#000"/></svg><svg class="a" style="left:1160px;top:193px" width="9" height="9" viewBox="0 0 9 9"><path d="M0.8 0.8L8.2 8.2M8.2 0.8L0.8 8.2" stroke="#000" stroke-width="1.6"/></svg>
<div class="a" style="left:1026px;top:210px;width:147px;height:499px;border-top:2px solid #777;border-left:2px solid #888;border-right:1px solid #fff;border-bottom:1px solid #fff"></div>
<div class="a" style="left:1033px;top:214px;width:88px;height:22px;border:1px solid #c6c6c6;background:#f0eff0;overflow:hidden;font-size:11.5px;color:#8a8a8a;line-height:20px;padding-left:2px;white-space:nowrap"><span style="display:inline-block;width:71px;overflow:hidden">MULTICOLOR</span></div>
<svg class="a" style="left:1111px;top:224px" width="6" height="3" viewBox="0 0 6 3"><path d="M0 0H6L3 3Z" fill="#999"/></svg>
<div class="a" style="left:1033px;top:235px;width:49px;height:23px;border:1px solid #c6c6c6;background:#f0eff0;font-size:11px;color:#8a8a8a;line-height:21px;padding-left:2px">256</div>
<svg class="a" style="left:1071px;top:246px" width="6" height="3" viewBox="0 0 6 3"><path d="M0 0H6L3 3Z" fill="#999"/></svg>
<div class="a" style="left:1036px;top:260px;width:134px;height:1px;background:#c8c8c8"></div>
<div class="a" style="left:1036px;top:287px;width:134px;height:1px;background:#fafafa"></div>
<div class="a" style="left:1134px;top:290px;width:1px;height:410px;background:#fbfbfb"></div>
<div class="a" style="left:1153px;top:290px;width:1px;height:204px;background:#fbfbfb"></div>
<div class="a" style="left:1153px;top:500px;width:1px;height:200px;background:#fbfbfb"></div>
<!--SCALE-->
<svg class="a" style="left:1027px;top:211px" width="146" height="497" viewBox="1027 211 146 497" font-family="Liberation Sans, sans-serif">
<g fill="none" stroke="#c4c4c4" stroke-width="1">
<path d="M1037.5 272.5H1047.5V283.5H1037.5ZM1039 276H1046M1039 279H1046M1039 281.5H1046"/><path d="M1041 272L1045 268L1049 272" stroke-width="1.5"/><path d="M1046 268.5H1051V274" stroke-width="2"/>
</g>
<g fill="#c4c4c4" stroke="#c4c4c4">
<path d="M1066.5 268L1063.5 271.5H1069.5Z M1066.5 283L1063.5 279.5H1069.5Z" stroke="none"/><path d="M1066.5 271V280" stroke-width="1.5"/>
<path d="M1088.5 270L1085.5 273.5H1091.5Z" stroke="none"/><path d="M1088.5 273V277M1083 280.5H1094" stroke-width="1.2"/>
<path d="M1110.5 281L1107.5 277.5H1113.5Z" stroke="none"/><path d="M1105 270.5H1116M1110.5 274V278" stroke-width="1.2"/>
<path d="M1128 269.5H1139M1128 282.5H1139M1133.5 272V280" stroke-width="1.2"/><path d="M1133.5 271L1130.5 274H1136.5Z M1133.5 281L1130.5 278H1136.5Z" stroke="none"/>
<path d="M1150 276H1161M1155.5 269V283" stroke-width="1.2"/><path d="M1155.5 268L1152.5 271.5H1158.5Z M1155.5 284L1152.5 280.5H1158.5Z" stroke="none"/>
</g>
<defs><linearGradient id="cb" gradientUnits="userSpaceOnUse" x1="0" y1="297" x2="0" y2="696"><stop offset="0.0000" stop-color="#e8a8b0"/><stop offset="0.0476" stop-color="#e06080"/><stop offset="0.0902" stop-color="#e02850"/><stop offset="0.1654" stop-color="#e03030"/><stop offset="0.2306" stop-color="#e86a28"/><stop offset="0.2732" stop-color="#f0a020"/><stop offset="0.3158" stop-color="#e8e828"/><stop offset="0.4110" stop-color="#90c040"/><stop offset="0.4987" stop-color="#40a848"/><stop offset="0.5614" stop-color="#38a848"/><stop offset="0.6040" stop-color="#50b098"/><stop offset="0.6591" stop-color="#20a8e0"/><stop offset="0.7343" stop-color="#4070c0"/><stop offset="0.8195" stop-color="#3048a0"/><stop offset="0.8947" stop-color="#340a88"/><stop offset="0.9599" stop-color="#3a0e78"/><stop offset="1.0000" stop-color="#481068"/></linearGradient></defs>
<rect x="1095.5" y="297.5" width="30" height="398" fill="url(#cb)" stroke="#111" stroke-width="1"/>
<path d="M1092.5 297V696M1085 298.5H1093M1085 337.5H1093M1085 377.5H1093M1085 416.5H1093M1085 456.5H1093M1085 496.5H1093M1085 535.5H1093M1085 575.5H1093M1085 615.5H1093M1085 654.5H1093M1085 694.5H1093M1088 317.5H1093M1088 357.5H1093M1088 397.5H1093M1088 436.5H1093M1088 476.5H1093M1088 515.5H1093M1088 555.5H1093M1088 595.5H1093M1088 634.5H1093M1088 674.5H1093" stroke="#111" stroke-width="1.2" fill="none"/>
<text x="1081" y="301.5" font-size="10.5" text-anchor="end" fill="#111">650.0 °C</text>
<text x="1081" y="341.1" font-size="10.5" text-anchor="end" fill="#111">625.0 °C</text>
<text x="1081" y="380.8" font-size="10.5" text-anchor="end" fill="#111">600.0 °C</text>
<text x="1081" y="420.4" font-size="10.5" text-anchor="end" fill="#111">575.0 °C</text>
<text x="1081" y="460.0" font-size="10.5" text-anchor="end" fill="#111">550.0 °C</text>
<text x="1081" y="499.6" font-size="10.5" text-anchor="end" fill="#111">525.0 °C</text>
<text x="1081" y="539.3" font-size="10.5" text-anchor="end" fill="#111">500.0 °C</text>
<text x="1081" y="578.9" font-size="10.5" text-anchor="end" fill="#111">475.0 °C</text>
<text x="1081" y="618.5" font-size="10.5" text-anchor="end" fill="#111">450.0 °C</text>
<text x="1081" y="658.2" font-size="10.5" text-anchor="end" fill="#111">425.0 °C</text>
<text x="1081" y="697.8" font-size="10.5" text-anchor="end" fill="#111">400.0 °C</text>
<path d="M1137 302.5L1141 298.5L1145 302.5M1137 694L1141 698L1145 694M1156 302.5L1160 298.5L1164 302.5M1156 484L1160 488L1164 484M1156 512.5L1160 508.5L1164 512.5M1156 694L1160 698L1164 694" stroke="#c4c4c4" stroke-width="1.4" fill="none"/>
</svg>
<!--/SCALE-->

<!-- ROI PANEL -->
<div class="hdr act" style="left:239px;top:714px;width:934px;height:25px;line-height:26px">ROI: Line Profiles</div>
<svg class="a" style="left:1145px;top:722px" width="9" height="10" viewBox="0 0 9 10"><path d="M2.5 0.5H6.5V6M2.5 0.5V6M5.5 1V6M0 6.5H9M4.5 6.5V10" stroke="#000" stroke-width="1.1" fill="none"/><rect x="5" y="0.5" width="1.6" height="6" fill="#000"/></svg><svg class="a" style="left:1160px;top:722px" width="9" height="9" viewBox="0 0 9 9"><path d="M0.8 0.8L8.2 8.2M8.2 0.8L0.8 8.2" stroke="#000" stroke-width="1.6"/></svg>
<div class="a" style="left:239px;top:739px;width:934px;height:213px;background:#f0eff0"></div>
<div class="a" style="left:243px;top:743px;width:927px;height:186px;border-top:2px solid #7d7d7d;border-left:2px solid #8d8d8d;border-right:1px solid #fff;border-bottom:1px solid #fff;background:linear-gradient(180deg,#fbfbfb 0px,#f1f0f1 40px)"></div>
<div class="a" style="left:245px;top:787px;width:924px;height:1px;background:#fff"></div>
<!--CHART-->
<svg class="a" style="left:239px;top:739px" width="935" height="213" viewBox="239 739 935 213" font-family="Liberation Sans, sans-serif">
<rect x="242.5" y="742.5" width="928" height="187" fill="none" stroke="#b4b4b4"/>
<path d="M245 929V745H1169" fill="none" stroke="#6e6e6e" stroke-width="2"/>
<path d="M246 928.5H1169.5V746" fill="none" stroke="#fff" stroke-width="1"/>
<defs><linearGradient id="tb" x1="0" y1="0" x2="0" y2="1"><stop offset="0" stop-color="#fdfdfd"/><stop offset="1" stop-color="#f0eff0"/></linearGradient></defs>
<rect x="246" y="746" width="923" height="28" fill="url(#tb)"/>
<path d="M247 787.5H1169" stroke="#fff"/>
<rect x="254.5" y="753.5" width="13" height="13" fill="#e8e8e8" stroke="#bdbdbd"/>
<path d="M258 763L263.5 757.5M260 757.5H263.5V761" stroke="#9a9a9a" stroke-width="1.8" fill="none"/>
<path d="M275.5 752V767M303.5 752V767M332.5 752V767" stroke="#b8b8b8"/>
<path d="M287 753L284 756.5H290ZM287 766L284 762.5H290Z" fill="#bcbcbc"/><path d="M287 756V763" stroke="#bcbcbc" stroke-width="2"/><path d="M293.5 753V766M291 753.5H294M291 759.5H294M291 765.5H294" stroke="#b0b0b0"/>
<rect x="307.5" y="748.5" width="22" height="22" fill="#dde6f1" stroke="#a8a8a8"/>
<path d="M316 754.5H325M316 759.5H325M316 764.5H325" stroke="#8a8a8a" stroke-width="1.3"/><circle cx="312.5" cy="754.5" r="1.2" fill="#aaa"/><circle cx="312.5" cy="759.5" r="1.2" fill="#aaa"/><circle cx="312.5" cy="764.5" r="1.2" fill="#aaa"/>
<path d="M339.5 753.5H346L348.5 756V766.5H339.5Z" fill="#eee" stroke="#bdbdbd"/><rect x="344" y="759" width="11" height="8" fill="#c4c4c4"/><rect x="347" y="760" width="5" height="3" fill="#eee"/>
<text x="685" y="784" font-size="10.5" text-anchor="middle" fill="#111">ROI: Line Profiles</text>
<path d="M249 788.5H1125.5V925" fill="none" stroke="#fafafa"/>
<path d="M1125.5 788V925.5H249" fill="none" stroke="#a8a8a8"/>
<path d="M333.5 798V898M369.5 798V898M404.5 798V898M439.5 798V898M475.5 798V898M510.5 798V898M545.5 798V898M581.5 798V898M616.5 798V898M651.5 798V898M687.5 798V898M722.5 798V898M757.5 798V898M793.5 798V898M828.5 798V898M863.5 798V898M899.5 798V898M934.5 798V898M969.5 798V898M1004.5 798V898M1040.5 798V898M1075.5 798V898M1110.5 798V898M299 858.5H1111M299 818.5H1111" stroke="#c8c8c8" stroke-width="1" fill="none"/>
<path d="M298.5 898.5V797.5H1111.5V898.5H298.5" fill="none" stroke="#a0a0a0" stroke-width="1.3"/>
<path d="M291 898.5H298M291 858.5H298M291 818.5H298M333.5 899V906M369.5 899V906M404.5 899V906M439.5 899V906M475.5 899V906M510.5 899V906M545.5 899V906M581.5 899V906M616.5 899V906M651.5 899V906M687.5 899V906M722.5 899V906M757.5 899V906M793.5 899V906M828.5 899V906M863.5 899V906M899.5 899V906M934.5 899V906M969.5 899V906M1004.5 899V906M1040.5 899V906M1075.5 899V906M1110.5 899V906" stroke="#000" stroke-width="1.2" fill="none"/>
<text x="290" y="902.3" font-size="11" text-anchor="end" fill="#111">400,0 °C</text>
<text x="290" y="862.3" font-size="11" text-anchor="end" fill="#111">500,0 °C</text>
<text x="290" y="822.3" font-size="11" text-anchor="end" fill="#111">600,0 °C</text>
<text x="333.4" y="920" font-size="11" text-anchor="middle" fill="#111">20</text>
<text x="368.7" y="920" font-size="11" text-anchor="middle" fill="#111">40</text>
<text x="404.1" y="920" font-size="11" text-anchor="middle" fill="#111">60</text>
<text x="439.4" y="920" font-size="11" text-anchor="middle" fill="#111">80</text>
<text x="474.7" y="920" font-size="11" text-anchor="middle" fill="#111">100</text>
<text x="510.0" y="920" font-size="11" text-anchor="middle" fill="#111">120</text>
<text x="545.3" y="920" font-size="11" text-anchor="middle" fill="#111">140</text>
<text x="580.7" y="920" font-size="11" text-anchor="middle" fill="#111">160</text>
<text x="616.0" y="920" font-size="11" text-anchor="middle" fill="#111">180</text>
<text x="651.3" y="920" font-size="11" text-anchor="middle" fill="#111">200</text>
<text x="686.6" y="920" font-size="11" text-anchor="middle" fill="#111">220</text>
<text x="721.9" y="920" font-size="11" text-anchor="middle" fill="#111">240</text>
<text x="757.3" y="920" font-size="11" text-anchor="middle" fill="#111">260</text>
<text x="792.6" y="920" font-size="11" text-anchor="middle" fill="#111">280</text>
<text x="827.9" y="920" font-size="11" text-anchor="middle" fill="#111">300</text>
<text x="863.2" y="920" font-size="11" text-anchor="middle" fill="#111">320</text>
<text x="898.5" y="920" font-size="11" text-anchor="middle" fill="#111">340</text>
<text x="933.9" y="920" font-size="11" text-anchor="middle" fill="#111">360</text>
<text x="969.2" y="920" font-size="11" text-anchor="middle" fill="#111">380</text>
<text x="1004.5" y="920" font-size="11" text-anchor="middle" fill="#111">400</text>
<text x="1039.8" y="920" font-size="11" text-anchor="middle" fill="#111">420</text>
<text x="1075.1" y="920" font-size="11" text-anchor="middle" fill="#111">440</text>
<text x="1110.5" y="920" font-size="11" text-anchor="middle" fill="#111">460</text>
<path d="M1076.5 798V898" stroke="#000" stroke-width="1.5"/>
<path d="M309.1 898.7C309.4 893.9 310.0 882.1 310.8 874.5C311.6 866.9 312.2 863.9 313.0 860.7C313.8 857.5 314.0 860.9 315.0 858.6C316.0 856.3 316.9 851.6 318.2 849.1C319.5 846.6 319.7 847.1 321.4 846.0C323.1 844.9 324.2 845.1 326.7 843.8C329.2 842.5 331.9 840.4 334.0 839.6C336.1 838.8 335.7 839.6 337.2 840.0C338.7 840.4 339.6 841.4 341.5 841.7C343.4 842.0 344.6 841.5 346.7 841.7C348.8 841.9 350.1 842.0 352.0 842.8C353.9 843.6 353.7 845.0 356.2 845.5C358.7 846.0 362.2 844.6 364.7 845.5C367.2 846.4 367.2 848.6 368.9 850.2C370.6 851.8 371.6 853.7 373.1 853.3C374.6 852.9 374.8 852.4 376.3 848.0C377.8 843.6 378.8 834.8 380.5 831.2C382.2 827.6 382.6 829.7 384.7 830.1C386.8 830.5 388.8 833.3 391.1 833.3C393.4 833.3 393.9 830.3 396.4 830.1C398.9 829.9 401.2 832.5 403.7 832.2C406.2 831.9 407.5 828.6 409.0 828.4C410.5 828.2 410.0 826.2 411.1 831.2C412.2 836.2 413.0 850.6 414.3 853.3C415.6 856.0 416.0 847.5 417.5 844.9C419.0 842.3 420.0 841.1 421.7 840.3C423.4 839.5 424.7 841.0 425.9 840.7C427.1 840.4 426.3 835.8 427.6 839.0C428.9 842.2 430.6 853.8 432.2 856.5C433.8 859.2 433.5 856.7 435.4 852.3C437.3 847.9 438.8 838.1 441.8 834.3C444.8 830.5 447.0 834.3 450.2 833.3C453.4 832.3 455.5 829.7 457.6 829.1C459.7 828.5 459.3 824.4 460.8 830.1C462.3 835.8 463.9 851.8 465.0 857.6C466.1 863.4 465.2 860.7 466.5 859.3C467.8 857.9 469.7 852.5 471.3 850.8C472.9 849.1 473.0 850.5 474.5 850.8C476.0 851.1 476.4 853.6 478.7 852.3C481.0 851.0 483.6 844.9 486.1 844.5C488.6 844.1 489.9 848.2 491.4 850.2C492.9 852.2 491.2 851.7 493.5 854.4C495.8 857.1 500.5 860.8 503.0 863.9C505.5 867.0 505.2 867.1 506.1 869.8C507.0 872.5 506.7 878.4 507.6 877.6C508.5 876.8 509.2 869.0 510.4 866.0C511.6 863.0 512.3 868.1 513.5 862.8C514.7 857.5 514.6 845.5 516.3 839.6C518.0 833.7 520.0 835.2 522.0 833.3C524.0 831.4 524.7 831.5 526.2 830.1C527.7 828.7 528.0 824.2 529.4 826.3C530.8 828.4 531.5 836.8 533.2 840.7C534.9 844.6 535.6 844.2 537.8 846.0C540.0 847.8 541.6 848.9 544.2 849.5C546.8 850.1 548.5 849.8 550.6 849.1C552.7 848.4 552.7 847.9 554.8 846.0C556.9 844.1 559.0 840.7 561.1 839.6C563.2 838.5 563.0 838.6 565.3 840.3C567.6 842.0 570.2 847.1 572.7 848.1C575.2 849.1 576.3 847.0 578.0 845.3C579.7 843.6 579.3 842.2 581.2 839.6C583.1 837.0 584.5 834.5 587.5 832.2C590.5 829.9 593.3 829.8 596.0 828.0C598.7 826.2 599.3 823.6 601.2 823.2C603.1 822.8 603.8 823.2 605.5 825.9C607.2 828.6 608.4 832.1 609.7 836.5C611.0 840.9 611.2 842.8 611.8 848.1C612.4 853.4 612.2 859.6 612.8 862.8C613.4 866.0 613.9 864.7 615.0 863.9C616.1 863.1 616.2 860.7 618.1 858.6C620.0 856.5 621.1 854.9 624.5 853.3C627.9 851.7 632.1 851.0 635.0 850.6C637.9 850.2 637.1 850.4 639.2 851.2C641.3 852.0 643.1 852.7 645.6 854.4C648.1 856.1 649.4 857.2 651.9 859.7C654.4 862.2 656.5 866.7 658.2 867.1C659.9 867.5 659.5 867.9 660.4 861.8C661.3 855.7 661.5 844.1 662.5 836.5C663.5 828.9 664.3 826.0 665.6 823.8C666.9 821.6 666.9 824.9 668.8 825.5C670.7 826.1 672.6 826.9 675.1 827.0C677.6 827.1 679.5 825.2 681.5 826.0C683.5 826.8 684.0 831.3 685.3 831.2C686.6 831.1 686.7 822.8 687.8 825.5C688.9 828.2 689.7 835.5 691.0 844.9C692.3 854.3 693.0 864.9 694.1 872.3C695.2 879.7 695.4 880.5 696.3 881.8C697.2 883.1 696.9 886.5 698.4 878.7C699.9 870.9 701.9 853.1 703.6 842.8C705.3 832.5 705.1 831.4 706.8 827.0C708.5 822.6 710.0 819.3 712.1 820.6C714.2 821.9 714.9 828.2 717.4 833.3C719.9 838.4 721.9 842.4 724.8 846.0C727.7 849.6 728.5 849.3 732.1 851.2C735.7 853.1 739.5 854.9 742.7 855.5C745.9 856.1 744.2 854.5 748.0 854.4C751.8 854.3 758.1 855.4 761.7 855.0C765.3 854.6 763.9 856.4 766.0 852.3C768.1 848.2 769.4 841.5 772.3 834.3C775.2 827.1 778.2 819.6 780.7 816.4C783.2 813.2 783.5 817.4 785.0 818.5C786.5 819.6 786.9 817.8 788.2 821.7C789.5 825.6 789.9 837.2 791.3 838.1C792.7 839.0 793.4 827.1 795.1 826.3C796.8 825.5 798.2 829.3 799.8 834.3C801.4 839.3 801.7 843.6 803.0 851.2C804.3 858.8 805.1 867.4 806.1 872.3C807.1 877.2 807.3 875.1 808.2 875.5C809.1 875.9 809.7 879.4 810.8 874.5C811.9 869.6 812.3 859.0 813.5 851.2C814.7 843.4 815.2 838.1 816.7 835.4C818.2 832.7 818.8 835.4 820.9 837.5C823.0 839.6 824.0 842.3 827.2 846.0C830.4 849.7 833.9 858.9 836.7 855.9C839.5 852.9 839.5 836.6 841.0 831.2C842.5 825.8 842.6 828.7 844.1 829.1C845.6 829.5 846.4 830.6 848.3 833.3C850.2 836.0 851.5 839.0 853.6 842.8C855.7 846.6 856.6 851.5 858.9 852.3C861.2 853.1 862.9 847.8 865.2 847.0C867.5 846.2 868.8 846.8 870.5 848.1C872.2 849.4 872.6 850.1 873.7 853.3C874.8 856.5 874.3 866.6 876.2 863.9C878.1 861.2 881.2 844.8 883.2 839.6C885.2 834.4 884.1 839.2 886.4 838.1C888.7 837.0 892.1 835.9 894.8 834.3C897.5 832.7 897.8 831.1 900.1 830.1C902.4 829.1 904.3 828.3 906.4 829.1C908.5 829.9 909.1 829.5 910.6 834.3C912.1 839.1 912.2 845.9 913.8 853.3C915.4 860.7 916.4 870.0 918.5 871.3C920.6 872.6 922.5 863.8 924.4 859.7C926.3 855.6 926.5 849.7 928.2 850.8C929.9 851.9 930.8 866.6 932.8 865.0C934.8 863.4 935.6 848.9 938.1 842.8C940.6 836.7 942.8 836.1 945.5 834.3C948.2 832.5 948.8 834.0 951.8 833.9C954.8 833.8 956.9 833.8 960.3 833.9C963.7 834.0 966.2 833.4 968.7 834.3C971.2 835.2 971.5 837.4 972.9 838.6C974.3 839.8 975.1 840.0 975.7 840.3" fill="none" stroke="#1c8a3e" stroke-width="1.2" stroke-linejoin="round"/>
<text x="990" y="877" font-size="10.5" fill="#1c8a3e">Linie</text>
<path d="M1129.5 775V922M1148.5 775V846M1148.5 853V922" stroke="#fbfbfb"/>
<path d="M1132.5 787.5L1136.5 783.5L1140.5 787.5M1132.5 912L1136.5 916L1140.5 912M1151.5 787.5L1155.5 783.5L1159.5 787.5M1151.5 836.5L1155.5 840.5L1159.5 836.5M1151.5 864.5L1155.5 860.5L1159.5 864.5M1151.5 912L1155.5 916L1159.5 912" stroke="#c4c4c4" stroke-width="1.4" fill="none"/>
<path d="M244.5 929.5V946Q244.5 949 247.5 949H327.5Q330.5 949 330.5 946V929.5" fill="#ebebeb" stroke="#a8a8a8"/>
<path d="M331.5 929.5V946Q331.5 949 334.5 949H445.5Q448.5 949 448.5 946V929.5" fill="#fbfbfb" stroke="#a8a8a8"/>
<rect x="250.5" y="932.5" width="14" height="12" fill="#dfe8f4" stroke="#5a78a8"/><path d="M251 936.5H264M251 940.5H264M255 933V944M259.5 933V944" stroke="#5a78a8" stroke-width="0.8"/>
<text x="268" y="943" font-size="11.3" fill="#7a8090">ROI List: All</text>
<rect x="337.5" y="932.5" width="14" height="12" fill="#fff" stroke="#4a6a98"/><path d="M339 942L342 938L345 937.5L348 941L350 941" stroke="#1a8a3a" stroke-width="1.2" fill="none"/>
<text x="355.5" y="943" font-size="11.3" fill="#111">ROI: Line Profiles</text>
</svg>
<!--/CHART-->

</body></html>
